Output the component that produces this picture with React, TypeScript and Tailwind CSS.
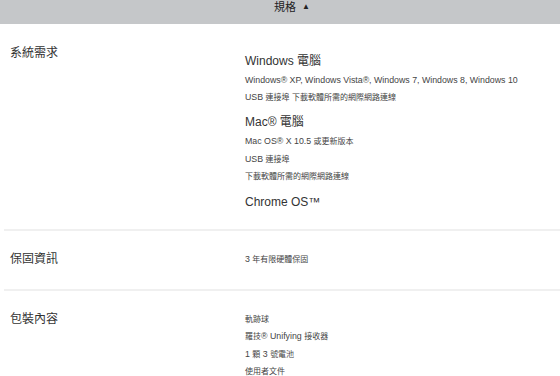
const font = { fontFamily: '"Liberation Sans", "Noto Sans CJK TC", sans-serif' };

interface Group {
  title?: string;
  lines: string[];
  gap?: string;
}

interface Section {
  label: string;
  groups: Group[];
  className: string;
  bodyTop: string;
}

const sections: Section[] = [
  {
    label: '系統需求',
    className: 'pt-[19px] pb-[16px]',
    bodyTop: 'mt-[8px]',
    groups: [
      {
        title: 'Windows 電腦',
        lines: [
          'Windows® XP, Windows Vista®, Windows 7, Windows 8, Windows 10',
          'USB 連接埠 下載軟體所需的網際網路連線'
        ]
      },
      {
        title: 'Mac® 電腦',
        gap: 'mt-[6px]',
        lines: ['Mac OS® X 10.5 或更新版本', 'USB 連接埠', '下載軟體所需的網際網路連線']
      },
      { title: 'Chrome OS™', gap: 'mt-[6px]', lines: [] }
    ]
  },
  {
    label: '保固資訊',
    className: 'pt-[18px] pb-[20px]',
    bodyTop: 'mt-[2px]',
    groups: [{ lines: ['3 年有限硬體保固'] }]
  },
  {
    label: '包裝內容',
    className: 'pt-[18px]',
    bodyTop: 'mt-[2px]',
    groups: [{ lines: ['軌跡球', '羅技® Unifying 接收器', '1 顆 3 號電池', '使用者文件'] }]
  }
];

// CJK runs are set a touch smaller than the latin text, as in the original
function SmallText({ text }: { text: string }) {
  const parts = text.split(/([\u3400-\u9fff]+)/);
  return (
    <>
      {parts.map((part, i) =>
        /[\u3400-\u9fff]/.test(part) ? (
          <span key={i} className="text-[8px]">
            {part}
          </span>
        ) : (
          <span key={i}>{part}</span>
        )
      )}
    </>
  );
}

export default function App() {
  return (
    <div className="w-[560px] h-[376px] overflow-hidden bg-white text-[#333]" style={font}>
      <div className="h-6 bg-[#c5c7c9] flex items-start justify-center pl-6 text-[11px] leading-[14px] text-[#222]">
        <span>規格</span>
        <span className="ml-[6px] text-[8px]">▲</span>
      </div>
      <div className="pl-1">
        {sections.map((section, i) => (
          <div key={section.label}>
            {i > 0 && <div className="h-[2px] bg-[#f0f0f0]" />}
            <div className={`flex ${section.className}`}>
              <div className="w-[241px] pl-[6px] text-[12px] leading-5 text-[#333]">
                {section.label}
              </div>
              <div className={`flex-1 ${section.bodyTop}`}>
                {section.groups.map((group, gi) => (
                  <div key={gi} className={group.gap ?? ''}>
                    {group.title && (
                      <div className="text-[12px] leading-5 mb-[1px] text-[#333]">{group.title}</div>
                    )}
                    {group.lines.map(line => (
                      <div key={line} className="text-[8.8px] leading-[16.5px] text-[#444]">
                        <SmallText text={line} />
                      </div>
                    ))}
                  </div>
                ))}
              </div>
            </div>
          </div>
        ))}
      </div>
    </div>
  );
}
